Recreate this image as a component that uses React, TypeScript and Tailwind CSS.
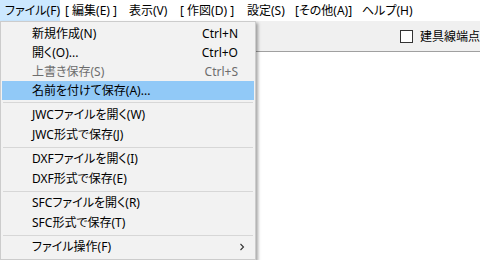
const font = { fontFamily: '"Noto Sans", "Noto Sans CJK JP", sans-serif', fontFeatureSettings: '"palt" 1' };

type MenuItem =
  | { kind: 'sep'; h: string }
  | { kind: 'item'; label: string; shortcut?: string; disabled?: boolean; active?: boolean; sub?: boolean; h: string };

const items: MenuItem[] = [
  { kind: 'item', label: '新規作成(N)', shortcut: 'Ctrl+N', h: 'h-[19px]' },
  { kind: 'item', label: '開く(O)...', shortcut: 'Ctrl+O', h: 'h-[19px]' },
  { kind: 'item', label: '上書き保存(S)', shortcut: 'Ctrl+S', disabled: true, h: 'h-[19px]' },
  { kind: 'item', label: '名前を付けて保存(A)...', active: true, h: 'h-[19px]' },
  { kind: 'sep', h: 'h-[5px]' },
  { kind: 'item', label: 'JWCファイルを開く(W)', h: 'h-[20px]' },
  { kind: 'item', label: 'JWC形式で保存(J)', h: 'h-[20px]' },
  { kind: 'sep', h: 'h-[4px]' },
  { kind: 'item', label: 'DXFファイルを開く(I)', h: 'h-[20px]' },
  { kind: 'item', label: 'DXF形式で保存(E)', h: 'h-[20px]' },
  { kind: 'sep', h: 'h-[4px]' },
  { kind: 'item', label: 'SFCファイルを開く(R)', h: 'h-[20px]' },
  { kind: 'item', label: 'SFC形式で保存(T)', h: 'h-[20px]' },
  { kind: 'sep', h: 'h-[4px]' },
  { kind: 'item', label: 'ファイル操作(F)', sub: true, h: 'h-[20px]' },
];

const bar = [
  { label: 'ファイル(F)', w: 'w-[60px]', open: true },
  { label: '[ 編集(E) ]', w: 'w-[64px]' },
  { label: '表示(V)', w: 'w-[51px]' },
  { label: '[ 作図(D) ]', w: 'w-[67px]' },
  { label: '設定(S)', w: 'w-[48px]' },
  { label: '[その他(A)]', w: 'w-[67px]' },
  { label: 'ヘルプ(H)', w: 'w-[60px]' },
];

function FileMenu() {
  return (
    <div className="absolute left-0 top-[21px] w-[256px] border border-[#cccccc] bg-[#f2f2f2] pt-[2px] pb-[2px] shadow-[2px_2px_3px_rgba(0,0,0,0.35)]">
      {items.map((it, i) =>
        it.kind === 'sep' ? (
          <div key={i} className={`${it.h} flex items-center px-[2px]`}>
            <div className="h-px w-full bg-[#d7d7d7]" />
          </div>
        ) : (
          <div key={i} className={`${it.h} mx-[1px] flex items-center ${it.active ? 'bg-[#91c9f7]' : ''}`}>
            <span className={`ml-[30px] flex-1 whitespace-nowrap ${it.disabled ? 'text-[#6d6d6d]' : 'text-black'}`}>
              {it.label}
            </span>
            {it.shortcut && (
              <span className={`mr-[16px] whitespace-nowrap ${it.disabled ? 'text-[#6d6d6d]' : 'text-black'}`}>
                {it.shortcut}
              </span>
            )}
            {it.sub && (
              <svg width="8" height="8" viewBox="0 0 8 8" className="mr-[8px]">
                <path d="M2.5 1 L5.5 4 L2.5 7" fill="none" stroke="#333" strokeWidth="1.1" />
              </svg>
            )}
          </div>
        ),
      )}
    </div>
  );
}

export default function App() {
  return (
    <div className="relative h-[260px] w-[480px] overflow-hidden bg-white text-[12px] leading-none text-black" style={font}>
      <div className="flex h-[21px] items-stretch bg-white">
        {bar.map((b) => (
          <div
            key={b.label}
            className={`${b.w} flex shrink-0 items-center whitespace-nowrap pl-[5px] ${b.open ? 'bg-[#cce8ff]' : ''}`}
          >
            {b.label}
          </div>
        ))}
      </div>
      <div className="flex h-[31px] items-center justify-end border-b border-[#a0a0a0] bg-[#f0f0f0] pt-[1px]">
        <div className="flex w-[80px] shrink-0 items-center gap-[7px] whitespace-nowrap">
          <span className="h-[13px] w-[13px] shrink-0 border border-[#333333] bg-white" />
          <span>建具線端点</span>
        </div>
      </div>
      <FileMenu />
    </div>
  );
}
